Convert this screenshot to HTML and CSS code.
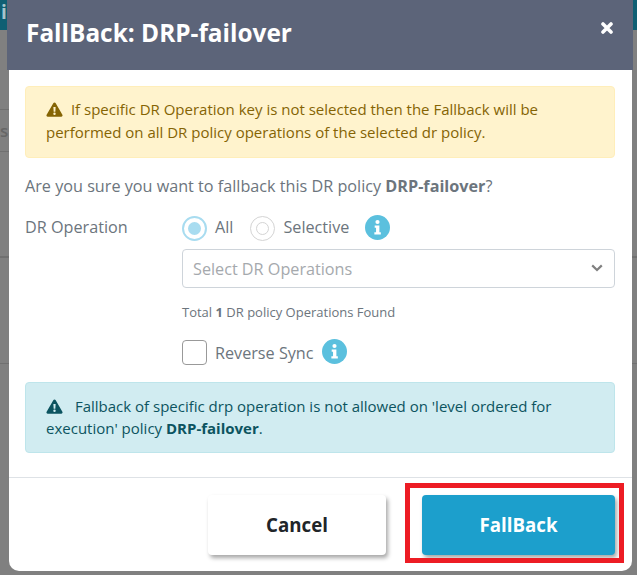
FILE: index.html
```html
<!DOCTYPE html>
<html lang="en">
<head>
    <meta charset="UTF-8">
    <meta name="viewport" content="width=device-width, initial-scale=1.0">
    <title>FallBack: DRP-failover</title>
    <link rel="stylesheet" href="styles.css">
</head>
<body>
    <!-- page behind the backdrop -->
    <div class="page-behind">
        <div class="topbar topbar-left">i</div>
        <div class="topbar topbar-right"></div>
        <span class="behind-letter">s</span>
        <div class="behind-line line-a"></div>
        <div class="behind-line line-d"></div>
        <div class="behind-line line-b"></div>
        <div class="behind-line line-c"></div>
    </div>

    <div class="modal">
        <div class="modal-header">
            <h1>FallBack: DRP-failover</h1>
            <svg class="close-icon" viewBox="0 0 12 12" width="12" height="12" aria-label="Close">
                <path d="M2 2 L10 10 M10 2 L2 10" stroke="#fff" stroke-width="3.6" stroke-linecap="round"/>
            </svg>
        </div>
        <div class="modal-body">
            <div class="alert alert-warning">
                <svg class="warn-icon" viewBox="0 0 18 16" width="17" height="15">
                    <path fill-rule="evenodd" d="M9 0.6 C9.6 0.6 10 0.9 10.3 1.4 L17.4 13.6 C18 14.6 17.3 15.7 16.2 15.7 L1.8 15.7 C0.7 15.7 0 14.6 0.6 13.6 L7.7 1.4 C8 0.9 8.4 0.6 9 0.6 Z M7.8 5.2 L8.1 10.4 L9.9 10.4 L10.2 5.2 Z M9 11.3 A1.3 1.3 0 1 0 9 13.9 A1.3 1.3 0 1 0 9 11.3 Z"/>
                </svg>
                If specific DR Operation key is not selected then the Fallback will be performed on all DR policy operations of the selected dr policy.
            </div>
            <p class="confirm">Are you sure you want to fallback this DR policy <b>DRP-failover</b>?</p>
            <div class="form-row">
                <label class="form-label">DR Operation</label>
                <div class="form-fields">
                    <div class="radio-row">
                        <span class="radio radio-on"></span>
                        <span class="option">All</span>
                        <span class="radio radio-off"></span>
                        <span class="option">Selective</span>
                        <svg class="info-icon" viewBox="0 0 24 24" width="25" height="25">
                            <circle cx="12" cy="12" r="12" fill="#5bc0de"/>
                            <circle cx="12" cy="6.7" r="2" fill="#fff"/>
                            <path d="M9.3 10 H13.8 V16.6 H15.2 V18.8 H9 V16.6 H10.6 V12.2 H9.3 Z" fill="#fff"/>
                        </svg>
                    </div>
                    <div class="select-box">
                        <span>Select DR Operations</span>
                        <svg class="chevron" viewBox="0 0 12 8" width="12" height="8">
                            <path d="M1.2 1.4 L6 6 L10.8 1.4" fill="none" stroke="#808080" stroke-width="2.2"/>
                        </svg>
                    </div>
                    <div class="found-text">Total <b>1</b> DR policy Operations Found</div>
                    <div class="check-row">
                        <span class="checkbox"></span>
                        <span class="option">Reverse Sync</span>
                        <svg class="info-icon" viewBox="0 0 24 24" width="25" height="25">
                            <circle cx="12" cy="12" r="12" fill="#5bc0de"/>
                            <circle cx="12" cy="6.7" r="2" fill="#fff"/>
                            <path d="M9.3 10 H13.8 V16.6 H15.2 V18.8 H9 V16.6 H10.6 V12.2 H9.3 Z" fill="#fff"/>
                        </svg>
                    </div>
                </div>
            </div>
            <div class="alert alert-info">
                <svg class="warn-icon" viewBox="0 0 18 16" width="17" height="15">
                    <path fill-rule="evenodd" d="M9 0.6 C9.6 0.6 10 0.9 10.3 1.4 L17.4 13.6 C18 14.6 17.3 15.7 16.2 15.7 L1.8 15.7 C0.7 15.7 0 14.6 0.6 13.6 L7.7 1.4 C8 0.9 8.4 0.6 9 0.6 Z M7.8 5.2 L8.1 10.4 L9.9 10.4 L10.2 5.2 Z M9 11.3 A1.3 1.3 0 1 0 9 13.9 A1.3 1.3 0 1 0 9 11.3 Z"/>
                </svg>
                Fallback of specific drp operation is not allowed on 'level ordered for execution' policy <b>DRP-failover</b>.
            </div>
        </div>
        <div class="modal-footer">
            <button class="btn btn-cancel">Cancel</button>
            <button class="btn btn-fallback">FallBack</button>
        </div>
    </div>

    <!-- annotation drawn over the screenshot -->
    <div class="highlight"></div>
</body>
</html>
```

FILE: styles.css
```css
html, body {
    height: 100%;
}
body {
    margin: 0;
    background-color: #808080;
    font-family: "Open Sans", "Noto Sans", sans-serif;
    font-size: 16.2px;
    color: #6c757d;
    overflow: hidden;
}
.page-behind .topbar {
    position: absolute;
    top: 0;
    height: 30px;
    background-color: #0f5f73;
}
.topbar-left {
    left: 0;
    width: 7px;
    overflow: hidden;
    padding-left: 1px;
    box-sizing: border-box;
    font-size: 19px;
    line-height: 25px;
    font-weight: 700;
    color: #a9c4cb;
}
.topbar-right {
    right: 0;
    width: 4px;
}
.behind-letter {
    position: absolute;
    left: 0;
    top: 119px;
    font-size: 17px;
    font-weight: 600;
    color: #666;
}
.behind-line {
    position: absolute;
    height: 1px;
    background-color: #707070;
}
.line-a {
    left: 0;
    width: 9px;
    top: 109px;
}
.line-d {
    left: 0;
    width: 9px;
    top: 151px;
}
.line-b {
    left: 0;
    width: 637px;
    top: 256px;
    height: 2px;
}
.line-c {
    left: 0;
    width: 637px;
    top: 363px;
}
.modal {
    position: absolute;
    left: 9px;
    top: 0;
    width: 623px;
    height: 571px;
    background-color: #fff;
    border-radius: 0 0 10px 10px;
    display: flex;
    flex-direction: column;
}
.modal-header {
    margin: 0 -1px 0 -2px;
    height: 70px;
    box-sizing: border-box;
    padding: 16px 20px 0 19px;
    background-color: #5c6479;
    display: flex;
    justify-content: space-between;
    align-items: flex-start;
    flex-shrink: 0;
}
.modal-header h1 {
    margin: 0;
    font-size: 24.4px;
    line-height: 33px;
    font-weight: 700;
    color: #fff;
}
.close-icon {
    margin-top: 6px;
}
.modal-body {
    padding: 16px 17px 0 16px;
    flex-grow: 1;
}
.alert {
    box-sizing: border-box;
    border-radius: 4px;
    border: 1px solid;
    padding: 11px 20px;
    font-size: 15px;
    line-height: 23px;
}
.alert-warning {
    height: 72px;
    background-color: #fff3cd;
    border-color: #ffeeba;
    color: #856404;
}
.alert-info {
    height: 71px;
    margin-top: 17px;
    padding-top: 12px;
    line-height: 22px;
    background-color: #d1ecf1;
    border-color: #bee5eb;
    color: #0c5460;
}
.alert b {
    color: #0c5460;
}
.warn-icon {
    fill: currentColor;
    vertical-align: -2px;
    margin-right: 4px;
}
.alert-info .warn-icon {
    margin-right: 8px;
}
.confirm {
    margin: 16px 0 0;
    line-height: 24px;
}
.form-row {
    display: flex;
    margin-top: 18px;
}
.form-label {
    width: 157px;
    flex-shrink: 0;
    line-height: 23px;
}
.form-fields {
    flex-grow: 1;
}
.radio-row, .check-row {
    display: flex;
    align-items: center;
    height: 25px;
}
.radio {
    box-sizing: border-box;
    width: 25px;
    height: 25px;
    border-radius: 50%;
    display: flex;
    align-items: center;
    justify-content: center;
}
.radio::after {
    content: "";
    display: block;
    box-sizing: border-box;
    width: 13px;
    height: 13px;
    border-radius: 50%;
}
.radio-on {
    border: 2px solid #a8dcf0;
}
.radio-on::after {
    background-color: #a8dcf0;
}
.radio-off {
    margin-left: 17px;
    border: 1px solid #d4d4d4;
}
.radio-off::after {
    border: 1px solid #d4d4d4;
}
.option {
    margin-left: 8px;
    margin-bottom: 4px;
}
.info-icon {
    margin-bottom: 2px;
}
.radio-row .info-icon {
    margin-left: 16px;
}
.select-box {
    box-sizing: border-box;
    height: 39px;
    margin-top: 8px;
    padding: 0 11px 0 10px;
    border: 1px solid #ced4da;
    border-radius: 4px;
    display: flex;
    align-items: center;
    justify-content: space-between;
    color: #a5a9ad;
}
.chevron {
    margin-top: -1px;
}
.found-text {
    margin-top: 14px;
    font-size: 13px;
    line-height: 20px;
}
.check-row {
    margin-top: 18px;
}
.checkbox {
    box-sizing: border-box;
    width: 25px;
    height: 25px;
    border: 1px solid #999;
    border-radius: 4px;
}
.check-row .info-icon {
    margin-left: 8px;
}
.check-row .option {
    margin-bottom: 0;
}
.modal-footer {
    height: 94px;
    box-sizing: border-box;
    border-top: 1px solid #dee2e6;
    padding: 17px 17px 0 0;
    display: flex;
    justify-content: flex-end;
    gap: 36px;
    flex-shrink: 0;
}
.btn {
    width: 178px;
    height: 60px;
    padding: 0 0 2px;
    border: 0;
    border-radius: 4px;
    font-family: inherit;
    font-size: 18.7px;
    font-weight: 700;
    box-shadow: 2px 3px 4px rgba(0, 0, 0, 0.35);
}
.btn-cancel {
    background-color: #fff;
    color: #212529;
}
.btn-fallback {
    width: 193px;
    background-color: #1c9fcc;
    color: #fff;
}
.highlight {
    position: absolute;
    left: 405px;
    top: 483px;
    width: 209px;
    height: 70px;
    border: 5px solid #ed1c24;
}
```
